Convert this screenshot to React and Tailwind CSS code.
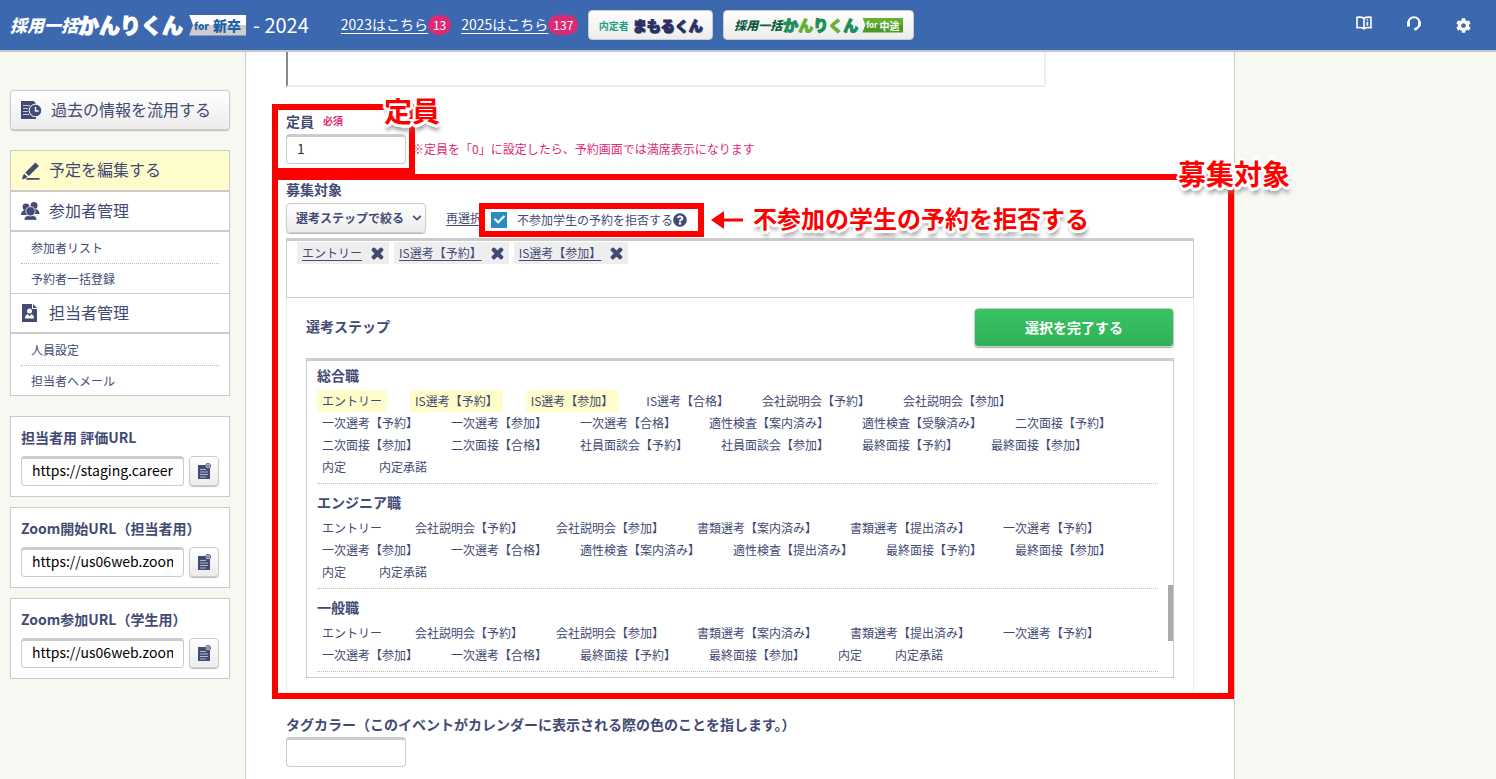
import { useState } from "react";
import { FaCheck, FaChevronDown, FaCog, FaQuestionCircle, FaTimes } from "react-icons/fa";

const stepGroups = [
  {
    name: "総合職",
    steps: [
      "エントリー", "IS選考【予約】", "IS選考【参加】", "IS選考【合格】", "会社説明会【予約】", "会社説明会【参加】",
      "一次選考【予約】", "一次選考【参加】", "一次選考【合格】", "適性検査【案内済み】", "適性検査【受験済み】", "二次面接【予約】",
      "二次面接【参加】", "二次面接【合格】", "社員面談会【予約】", "社員面談会【参加】", "最終面接【予約】", "最終面接【参加】",
      "内定", "内定承諾",
    ],
  },
  {
    name: "エンジニア職",
    steps: [
      "エントリー", "会社説明会【予約】", "会社説明会【参加】", "書類選考【案内済み】", "書類選考【提出済み】", "一次選考【予約】",
      "一次選考【参加】", "一次選考【合格】", "適性検査【案内済み】", "適性検査【提出済み】", "最終面接【予約】", "最終面接【参加】",
      "内定", "内定承諾",
    ],
  },
  {
    name: "一般職",
    steps: [
      "エントリー", "会社説明会【予約】", "会社説明会【参加】", "書類選考【案内済み】", "書類選考【提出済み】", "一次選考【予約】",
      "一次選考【参加】", "一次選考【合格】", "最終面接【予約】", "最終面接【参加】", "内定", "内定承諾",
    ],
  },
];

const urlCards = [
  { id: "review-url", title: "担当者用 評価URL", url: "https://staging.career-cloud.asia" },
  { id: "zoom-start-url", title: "Zoom開始URL（担当者用）", url: "https://us06web.zoom.us/s/" },
  { id: "zoom-join-url", title: "Zoom参加URL（学生用）", url: "https://us06web.zoom.us/j/" },
];

const BookIcon = () => (
  <svg width="16" height="14" viewBox="0 0 16 14" fill="none" stroke="white" strokeWidth="1.6">
    <path d="M8 2.4C6.2 1 3.6.9 1 1.3v10.4c2.6-.4 5.2-.3 7 1.1 1.8-1.4 4.4-1.5 7-1.1V1.3C12.4.9 9.800 1 8 2.400Zm0 0v10.400" />
    <path d="M11.400 3.300v1.300M11.400 5.800v3.900" />
  </svg>
);

const HeadsetIcon = () => (
  <svg width="16" height="15" viewBox="0 0 16 15" fill="none" stroke="white">
    <path d="M2.500 7V6.500a5.500 5.200 0 0 1 11 0V8c0 2.200-1.200 3.600-3.500 4.800" strokeWidth="2" />
    <path d="M2.500 5.500v5M13.500 5.500v4.500" strokeWidth="3" />
    <circle cx="9.500" cy="13" r="1.500" fill="white" stroke="none" />
  </svg>
);

const HistoryIcon = () => (
  <svg width="21" height="19" viewBox="0 0 21 19">
    <path d="M0 0h13l2 3v15H0Z" fill="#434a73" />
    <path d="M2 4.500h7M2 7.500h5M2 10.500h5M2 13.500h6" stroke="white" strokeWidth=".7" />
    <circle cx="14.500" cy="9.500" r="6.300" fill="#434a73" stroke="white" strokeWidth="1" />
    <path d="M14.500 6v4h3.200" fill="none" stroke="white" strokeWidth="1.400" />
  </svg>
);

const PencilIcon = () => (
  <svg width="18" height="18" viewBox="0 0 18 18" fill="#434a73">
    <path d="M13.500.5 17 4 6.800 14 3.300 10.500ZM2.200 11.800l3.300 3.300L4 16.300 0 17.500l1-4ZM5 16h12.500v1.800H4Z" />
  </svg>
);

const PeopleIcon = () => (
  <svg width="19" height="18" viewBox="0 0 19 18" fill="#434a73">
    <circle cx="5" cy="5" r="3.400" />
    <circle cx="13" cy="3.500" r="3.500" />
    <path d="M0 13c0-3 2-5 5-5s5 2 5 5ZM9 12c0-3 2-5 5-5s4.500 2.500 4.500 5Z" />
    <g stroke="white" strokeWidth=".8">
      <path d="M3 18.300c0-3.500 2.500-5 6.500-5s6.500 1.500 6.500 5Z" />
      <circle cx="9.500" cy="9.300" r="4.700" />
    </g>
  </svg>
);

const StaffIcon = () => (
  <svg width="16" height="18" viewBox="0 0 16 18">
    <path d="M0 0h10v5h5v13H0Z" fill="#434a73" />
    <path d="m11 0 4 4h-4Z" fill="#434a73" />
    <circle cx="7.500" cy="7" r="2.500" fill="white" />
    <path d="M3 14.500c0-3 1-4 2.700-4.300l1.800 2 1.800-2c1.700.3 2.700 1.300 2.700 4.300Z" fill="white" />
  </svg>
);

const CopyIcon = () => (
  <svg width="15" height="17" viewBox="0 0 15 17">
    <path d="M1 2h12v14H1Z" fill="#434a73" />
    <path d="M3 6.500h6M3 9h8M3 11.500h8M3 14h6" stroke="white" strokeWidth=".6" />
    <circle cx="11" cy="3" r="2.500" fill="white" stroke="#434a73" strokeWidth="1" />
    <path d="M11 1.500v3M9.500 3h3" stroke="#434a73" strokeWidth="1" />
  </svg>
);

// red caption placed on top of the form
const Callout = ({ className, children }) => (
  <span
    className={`absolute z-20 font-bold whitespace-nowrap text-[#fe0000] [text-shadow:2px_0_white,-2px_0_white,0_2px_white,0_-2px_white,2px_2px_white,-2px_2px_white,2px_-2px_white,-2px_-2px_white,3px_1px_white,-3px_1px_white,1px_3px_white,-1px_3px_white,1px_6px_4px_#888] ${className}`}
  >
    {children}
  </span>
);

const Frame = ({ className }) => (
  <div className={`absolute z-10 pointer-events-none border-6 border-[#fe0000] ${className}`} />
);

const Header = () => (
  <header className="h-[52px] flex items-center bg-[#3c68b0] border-b-2 border-[#c8c8c8] pl-[10px] pr-6 text-white whitespace-nowrap">
    <a href="#home" className="flex items-center">
      <span className="text-[17px] font-black italic">採用一括</span>
      <span className="text-[21px] font-black [-webkit-text-stroke:1px_white]">かんりくん</span>
      <span className="ml-[6px] h-[21px] w-[57px] flex items-center justify-center gap-1 bg-linear-to-b from-white from-50% to-[#ccc] to-50% text-[#1d62a8] font-black text-[14px] [clip-path:polygon(0_0,100%_0,100%_100%,0_100%,4px_50%)]">
        <span className="text-[10px]">for</span>新卒
      </span>
    </a>
    <span className="text-[20px] ml-[7px]">- 2024</span>
    <div className="flex items-center gap-[10px] ml-8 text-[14px]">
      <a href="#2023" className="flex items-center">
        <span className="pb-[2px] underline underline-offset-3">2023はこちら</span>
        <span className="h-5 px-[5px] rounded-full bg-[#dc2a75] text-[12px] leading-5">13</span>
      </a>
      <a href="#2025" className="flex items-center">
        <span className="pb-[2px] underline underline-offset-3">2025はこちら</span>
        <span className="h-5 px-[5px] rounded-full bg-[#dc2a75] text-[12px] leading-5">137</span>
      </a>
      <a href="#mamorukun" className="h-[30px] w-[125px] flex items-center justify-center gap-1 rounded-sm bg-linear-to-b from-white to-[#ececec] border border-[#ccc]">
        <span className="text-[10px] font-bold text-[#1fa283]">内定者</span>
        <span className="text-[14px] font-black text-[#2a2f63] [-webkit-text-stroke:1px_#2a2f63] [text-shadow:1px_1px_#9a9dbb]">まもるくん</span>
      </a>
      <a href="#kanrikun" className="h-[30px] w-[191px] flex items-center justify-center rounded-sm bg-linear-to-b from-white to-[#ececec] border border-[#ccc]">
        <span className="text-[12px] font-black italic text-[#0c5b3c]">採用一括</span>
        <span className="text-[15px] font-black ml-px text-[#1a8f57] [-webkit-text-stroke:1px]">
          か<span className="text-[#67b02e]">ん</span>り<span className="text-[#67b02e]">く</span>ん
        </span>
        <span className="ml-1 h-[15px] w-[41px] flex items-center justify-center gap-[2px] bg-linear-to-b from-[#63b035] from-50% to-[#4c9a2a] to-50% font-bold text-[10px] text-white [clip-path:polygon(0_0,100%_0,100%_100%,0_100%,3px_50%)]">
          <span className="text-[8px]">for</span>中途
        </span>
      </a>
    </div>
    <div className="ml-auto pr-px flex items-center gap-[34px]">
      <button aria-label="マニュアル" className="pb-1"><BookIcon /></button>
      <button aria-label="サポート" className="pb-1"><HeadsetIcon /></button>
      <button aria-label="設定"><FaCog size={15} /></button>
    </div>
  </header>
);

const Sidebar = () => (
  <aside className="w-[245px] shrink-0 pl-[10px] pr-[15px] pt-[38px]">
    <button className="w-full h-10 flex items-center gap-[9px] pl-[10px] rounded-sm border border-[#ccc] bg-linear-to-b from-white to-[#ececec] shadow-[0_1px_1px_#bbb] text-[16px]">
      <HistoryIcon />
      <span className="pb-[2px]">過去の情報を流用する</span>
    </button>

    <nav className="mt-5 border border-[#ccc] bg-white text-[12px]">
      <a href="#edit" className="h-[41px] flex items-center gap-[9px] pl-[11px] bg-[#fffccc] border-b-2 border-[#ccc] text-[16px]">
        <PencilIcon />
        <span className="pb-[3px]">予定を編集する</span>
      </a>
      <a href="#members" className="h-10 flex items-center gap-[9px] pl-[10px] border-b-2 border-[#ccc] text-[16px]">
        <PeopleIcon />
        <span className="pb-[3px]">参加者管理</span>
      </a>
      <div className="px-[10px] border-b border-[#ccc]">
        <a href="#member-list" className="h-8 flex items-center pl-[10px] border-b border-dotted border-[#bbb]">参加者リスト</a>
        <a href="#bulk" className="h-[29px] flex items-center pl-[10px]">予約者一括登録</a>
      </div>
      <a href="#staff" className="h-10 flex items-center gap-[11px] pl-[11px] border-b-2 border-[#ccc] text-[16px]">
        <StaffIcon />
        <span className="pb-[3px]">担当者管理</span>
      </a>
      <div className="px-[10px]">
        <a href="#staff-setting" className="h-8 flex items-center pl-[10px] border-b border-dotted border-[#bbb]">人員設定</a>
        <a href="#staff-mail" className="h-[29px] flex items-center pl-[10px]">担当者へメール</a>
      </div>
    </nav>

    <div className="mt-5 flex flex-col gap-[10px]">
      {urlCards.map((card) => (
        <div key={card.id} className="border border-[#ccc] bg-white p-[10px]">
          <label htmlFor={card.id} className="block text-[14px] leading-5 font-bold whitespace-nowrap">{card.title}</label>
          <div className="mt-[9px] flex gap-[5px]">
            <input
              id={card.id}
              readOnly
              defaultValue={card.url}
              className="flex-1 min-w-0 h-[30px] px-[10px] pb-1 rounded-sm border border-t-3 border-[#ccc] bg-white text-[14px] text-black"
            />
            <button aria-label="コピー" className="size-[30px] flex items-center justify-center rounded-sm border border-[#ccc] bg-linear-to-b from-white to-[#ececec] shadow-[0_1px_1px_#bbb]">
              <CopyIcon />
            </button>
          </div>
        </div>
      ))}
    </div>
  </aside>
);

const App = () => {
  const [selected, setSelected] = useState(["エントリー", "IS選考【予約】", "IS選考【参加】"]);
  const [reject, setReject] = useState(true);

  const removeStep = (step) => setSelected(selected.filter((s) => s !== step));

  return (
    <div className="min-h-screen flex flex-col bg-[#f7f8f2] text-[#434a73] font-['Noto_Sans_CJK_JP',sans-serif]">
      <Header />
      <div className="flex flex-1">
        <Sidebar />
        <main className="flex-1 min-w-0 max-w-[990px] bg-white border-x border-[#ccc] px-10 pb-3">
          <textarea aria-label="内容" className="block w-full max-w-[760px] h-[35px] resize-none border-2 border-t-0 border-[#eee] border-l-[#8a8a8a]" />

          <section className="relative mt-6">
            <Frame className="-left-[14px] -top-[7px] -bottom-[10px] w-[143px]" />
            <Callout className="left-[98px] -top-[21px] text-[28px] leading-10">定員</Callout>
            <label htmlFor="capacity" className="flex items-center gap-[9px] text-[14px] leading-5 font-bold">
              定員
              <span className="text-[10px] text-[#dc2a75]">必須</span>
            </label>
            <div className="mt-[3px] flex items-center gap-[6px]">
              <input id="capacity" defaultValue="1" className="w-[120px] h-[30px] px-[10px] pb-1 rounded-sm border border-t-3 border-[#ccc] text-[14px] text-[#333]" />
              <span className="text-[12px] text-[#dc2a75]">※定員を「0」に設定したら、予約画面では満席表示になります</span>
            </div>
          </section>

          <section className="relative mt-[15px]">
            <Frame className="-left-[14px] -right-10 -top-[5px] bottom-0" />
            <Callout className="-right-24 -top-[26px] text-[28px] leading-10">募集対象</Callout>
            <h2 className="text-[14px] leading-5 font-bold">募集対象</h2>
            <div className="mt-1 flex items-center text-[12px]">
              <div className="relative">
                <select aria-label="選考ステップで絞る" className="appearance-none w-[140px] h-[30px] pl-[9px] rounded-sm border border-[#ccc] bg-linear-to-b from-white to-[#ececec] shadow-[0_1px_1px_#bbb] font-bold">
                  <option>選考ステップで絞る</option>
                </select>
                <FaChevronDown size={10} className="absolute right-1 top-[10px] pointer-events-none" />
              </div>
              <a href="#reselect" className="ml-5 underline underline-offset-2">再選択</a>
              <div className="relative h-[30px] pt-[3px] ml-[9px] flex items-center">
                <Frame className="-left-3 -right-[17px] top-0 -bottom-1" />
                <label className="relative flex items-center gap-[10px]">
                  <input
                    type="checkbox"
                    checked={reject}
                    onChange={() => setReject(!reject)}
                    className="appearance-none size-4 border border-[#ccc] bg-white checked:bg-[#2a8bc2] checked:border-[#2a8bc2]"
                  />
                  {reject && <FaCheck size={11} className="absolute left-[3px] text-white pointer-events-none" />}
                  不参加学生の予約を拒否する
                </label>
                <FaQuestionCircle size={14} />
                <svg className="absolute left-full ml-6 top-2" width="32" height="18" viewBox="0 0 32 18" fill="#fe0000">
                  <path d="M0 9 13 0v7.500h19v3H13V18Z" />
                </svg>
                <Callout className="left-full ml-[66px] -top-[3px] text-[24px] leading-9">不参加の学生の予約を拒否する</Callout>
              </div>
            </div>

            <div className="mt-[5px] h-[60px] flex items-start gap-[5px] pt-px px-[10px] border border-t-3 border-[#ccc] text-[12px]">
              {selected.map((step) => (
                <span key={step} className="h-[22px] flex items-center gap-[9px] px-[5px] bg-[#eee]">
                  <a href="#step" className="underline underline-offset-2">{step}</a>
                  <button aria-label={`${step}を削除`} onClick={() => removeStep(step)}>
                    <FaTimes size={15} stroke="currentColor" strokeWidth="50" className="-mx-px" />
                  </button>
                </span>
              ))}
            </div>

            <div className="px-[19px] pt-[10px] pb-5 border border-t-0 border-[#eee]">
              <div className="flex items-center justify-between">
                <h3 className="pb-[2px] text-[14px] font-bold">選考ステップ</h3>
                <button className="w-[200px] h-[39px] rounded-sm border border-[#c4d3c6] bg-linear-to-b from-[#38c463] to-[#32b058] shadow-[0_1px_1px_#aaa] text-[14px] font-bold text-white">
                  選択を完了する
                </button>
              </div>
              <div className="relative mt-[11px] h-80 overflow-hidden pl-[10px] pr-[15px] border border-t-3 border-[#ccc]">
                {stepGroups.map((group) => (
                  <div key={group.name} className="pt-2 first:pt-1 pb-[5px] border-b border-dotted border-[#bbb]">
                    <h4 className="mb-[5px] text-[14px] leading-5 font-bold">{group.name}</h4>
                    <ul className="flex flex-wrap text-[12px] leading-[22px]">
                      {group.steps.map((step) => (
                        <li
                          key={step}
                          className={`mr-[23px] px-[5px] ${group.name === "総合職" && selected.includes(step) ? "bg-[#fffccc]" : ""}`}
                        >
                          {step}
                        </li>
                      ))}
                    </ul>
                  </div>
                ))}
                <div className="absolute right-0 bottom-9 w-[5px] h-14 bg-[#aaa]" />
              </div>
            </div>
          </section>

          <section className="mt-[15px]">
            <label htmlFor="tag-color" className="block text-[14px] leading-5 font-bold">
              タグカラー（このイベントがカレンダーに表示される際の色のことを指します。）
            </label>
            <input id="tag-color" className="mt-[3px] block w-[120px] h-[30px] px-[10px] rounded-sm border border-t-3 border-[#ccc]" />
          </section>
        </main>
      </div>
    </div>
  );
};

export default App;
